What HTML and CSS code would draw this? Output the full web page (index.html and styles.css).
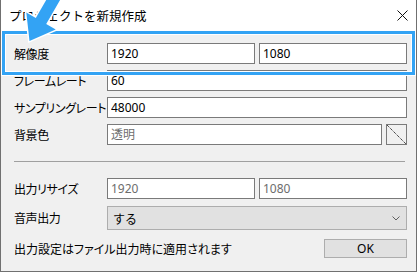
FILE: index.html
```html
<!DOCTYPE html>
<html lang="ja">
<head>
  <meta charset="UTF-8" />
  <title>プロジェクトを新規作成</title>
  <link rel="stylesheet" href="styles.css">
</head>
<body>
  <div class="window">
    <div class="titlebar">
      <span class="title">プロジェクトを新規作成</span>
      <svg class="close" width="11" height="11" viewBox="0 0 11 11">
        <path d="M0.5 0.5 L10.5 10.5 M10.5 0.5 L0.5 10.5" stroke="#111" stroke-width="1" fill="none"/>
      </svg>
    </div>

    <div class="content">
      <div class="form">
        <label>解像度</label>
        <div class="pair">
          <input class="field" value="1920">
          <input class="field" value="1080">
        </div>

        <label>フレームレート</label>
        <input class="field" value="60">

        <label>サンプリングレート</label>
        <input class="field" value="48000">

        <label>背景色</label>
        <div class="color-row">
          <input class="field" placeholder="透明">
          <button class="color-btn">
            <svg width="19" height="19" viewBox="0 0 19 19">
              <path d="M0 0 L19 19" stroke="#000" stroke-width="1" stroke-dasharray="1 1" fill="none"/>
            </svg>
          </button>
        </div>
      </div>

      <hr class="sep">

      <div class="form">
        <label>出力リサイズ</label>
        <div class="pair">
          <input class="field" value="1920" disabled>
          <input class="field" value="1080" disabled>
        </div>

        <label>音声出力</label>
        <div class="select">
          <span>する</span>
          <svg width="8" height="5" viewBox="0 0 8 5">
            <path d="M0.5 0.5 L4 4 L7.5 0.5" stroke="#606060" stroke-width="1" fill="none"/>
          </svg>
        </div>
      </div>

      <div class="footer">
        <span>出力設定はファイル出力時に適用されます</span>
        <button class="ok">OK</button>
      </div>
    </div>
  </div>

  <!-- annotation -->
  <div class="highlight"></div>
  <svg class="arrow" width="80" height="50" viewBox="0 0 80 50">
    <polygon points="29.5,40.9 26.3,12.5 35.8,18 55.8,-16.6 66.2,-10.6 46.2,24 55.7,29.5"
             fill="#33a3f4" stroke="#fff" stroke-width="3" stroke-linejoin="miter" paint-order="stroke"/>
  </svg>
</body>
</html>
```

FILE: styles.css
```css
body {
  margin: 0;
  background: #fff;
  font-family: "Noto Sans CJK JP", sans-serif;
  font-size: 12px;
  color: #000;
  position: relative;
  width: 420px;
  height: 272px;
  overflow: hidden;
}
.window {
  width: 417px;
  height: 272px;
  box-sizing: border-box;
  border: 1px solid #707070;
  border-top: none;
  background: #f0f0f0;
  display: flex;
  flex-direction: column;
}
.titlebar {
  height: 31px;
  background: #fff;
  display: flex;
  align-items: center;
  justify-content: space-between;
  padding: 0 8px 1px 8px;
  box-sizing: border-box;
}
.title {
  font-size: 12.5px;
}
.content {
  padding: 12px 9px 0 13px;
}
.form {
  display: grid;
  grid-template-columns: 93px 300px;
  row-gap: 6px;
  align-items: center;
}
.form label {
  font-feature-settings: "palt";
  font-size: 12px;
  letter-spacing: -0.4px;
  white-space: nowrap;
}
.pair {
  display: grid;
  grid-template-columns: 1fr 1fr;
  gap: 4px;
}
.field {
  height: 21px;
  box-sizing: border-box;
  border: 1px solid #7a7a7a;
  background: #fff;
  padding: 0 3px;
  font-family: "Noto Sans", "Noto Sans CJK JP", sans-serif;
  font-size: 12px;
  color: #000;
  width: 100%;
  outline: none;
}
.field::placeholder {
  color: #6d6d6d;
  font-family: "Noto Sans CJK JP", sans-serif;
}
.field:disabled {
  color: #6d6d6d;
  background: #fff;
  border-color: #7a7a7a;
}
.color-row {
  display: flex;
  gap: 4px;
}
.color-row .field {
  flex: 1;
}
.color-btn {
  width: 21px;
  height: 21px;
  padding: 0;
  border: 1px solid #7a7a7a;
  background: #f0f0f0;
  display: flex;
}
.sep {
  border: none;
  border-top: 1px solid #a0a0a0;
  margin: 16px 2px 16px 0;
  height: 0;
}
.select {
  height: 24px;
  margin-top: 1px;
  box-sizing: border-box;
  border: 1px solid #adadad;
  background: #e1e1e1;
  display: flex;
  align-items: center;
  justify-content: space-between;
  padding: 0 6px 0 5px;
}
.footer {
  display: flex;
  justify-content: space-between;
  align-items: center;
  margin-top: 9px;
  font-feature-settings: "palt";
  font-size: 12px;
}
.ok {
  width: 83px;
  height: 19px;
  border: 1px solid #adadad;
  background: #e1e1e1;
  font-family: "Noto Sans", sans-serif;
  font-size: 12px;
  padding: 0;
  line-height: 16px;
}
.highlight {
  position: absolute;
  left: 2px;
  top: 31px;
  width: 413px;
  height: 44px;
  box-sizing: border-box;
  border: 3px solid #33a3f4;
  box-shadow: 0 0 0 1px #fff, inset 0 0 0 1px #fff;
}
.arrow {
  position: absolute;
  left: 0;
  top: 0;
  overflow: visible;
}
```
